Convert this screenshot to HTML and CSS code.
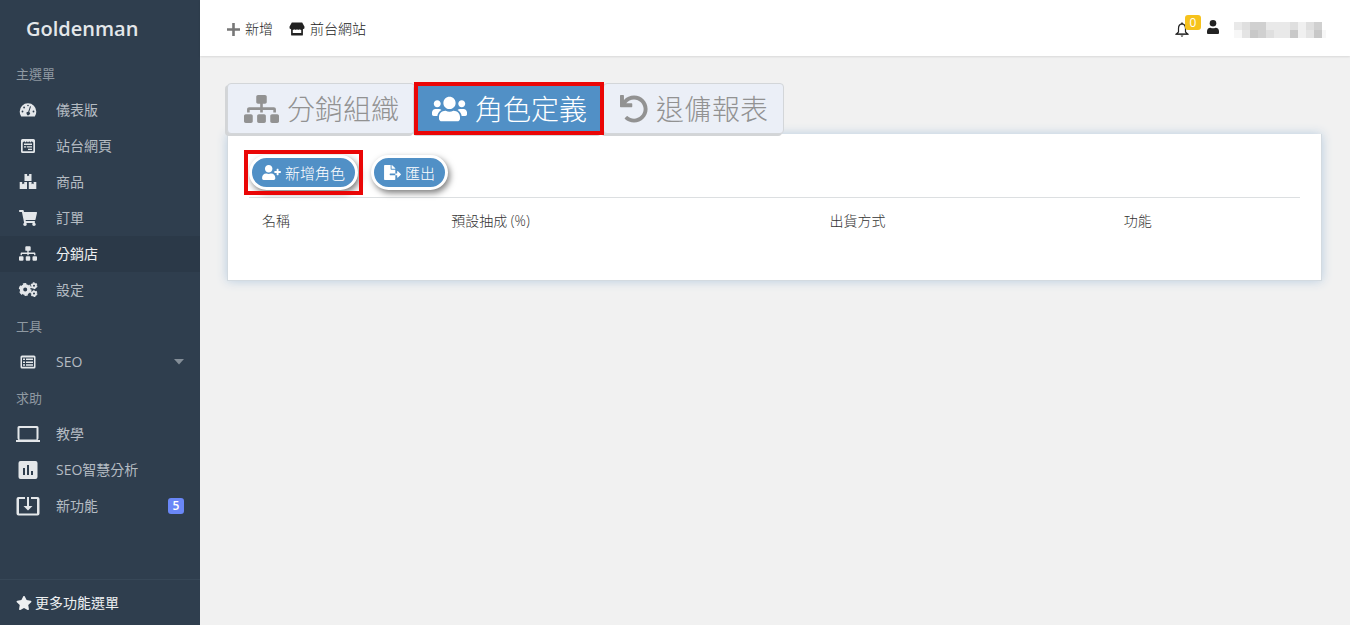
FILE: index.html
```html
<!DOCTYPE html>
<html lang="zh-Hant">
<head>
<meta charset="utf-8">
<meta name="viewport" content="width=device-width, initial-scale=1">
<title>Goldenman</title>
<link rel="stylesheet" href="styles.css">
</head>
<body>
<svg class="defs" aria-hidden="true">
  <symbol id="i-sitemap" viewBox="0 0 640 512"><path d="M128 352H32c-17.67 0-32 14.33-32 32v96c0 17.67 14.33 32 32 32h96c17.67 0 32-14.33 32-32v-96c0-17.67-14.33-32-32-32zm-24-80h192v48h48v-48h192v48h48v-57.59c0-21.17-17.23-38.41-38.41-38.41H344v-64h40c17.67 0 32-14.33 32-32V32c0-17.67-14.33-32-32-32H256c-17.67 0-32 14.33-32 32v96c0 17.67 14.33 32 32 32h40v64H94.41C73.23 224 56 241.23 56 262.41V320h48v-48zm264 80h-96c-17.67 0-32 14.33-32 32v96c0 17.67 14.33 32 32 32h96c17.67 0 32-14.33 32-32v-96c0-17.67-14.33-32-32-32zm240 0h-96c-17.67 0-32 14.33-32 32v96c0 17.67 14.33 32 32 32h96c17.67 0 32-14.33 32-32v-96c0-17.67-14.33-32-32-32z"/></symbol>
</svg>
<div class="app">
  <aside class="sidebar">
    <a class="brand" href="#">Goldenman</a>
    <nav class="menu">
      <h2 class="menu-title">主選單</h2>
      <a class="menu-item" href="#"><svg class="menu-icon" viewBox="0 0 24 24"><path fill-rule="evenodd" d="M5.200 18.500Q3.700 16.500 3.700 13.500a8.300 8.300 0 0 1 16.600 0Q20.300 16.500 18.800 18.500ZM11.200 7.500a.8.8 0 1 0 1.600 0a.8.8 0 1 0-1.600 0M7.200 9.500a.9.900 0 1 0 1.800 0a.9.900 0 1 0-1.800 0M5.600 13.500a.9.900 0 1 0 1.800 0a.9.900 0 1 0-1.800 0M16.600 13.500a.9.900 0 1 0 1.800 0a.9.900 0 1 0-1.800 0M14 8.200l-1.800 5.600a1.700 1.700 0 1 0 1 .3l1.800-5.600Z"/></svg><span>儀表版</span></a>
      <a class="menu-item" href="#"><svg class="menu-icon" viewBox="0 0 24 24"><path fill-rule="evenodd" d="M6.500 5h11q1.500 0 1.500 1.500v11q0 1.500-1.500 1.500h-11Q5 19 5 17.500v-11Q5 5 6.500 5ZM6.700 8.500v8.800h10.600V8.500l-1.600-1.200l-1.200 1.200l-1.300-1.200l-1.200 1.200l-1.200-1.200l-1.300 1.200l-1.200-1.200ZM8 9.500h8v1.500H8ZM8 12.200h2v1.300H8ZM10.800 12.200H16v1.300h-5.200ZM12 14.800h4v1.300h-4Z"/></svg><span>站台網頁</span></a>
      <a class="menu-item" href="#"><svg class="menu-icon" viewBox="0 0 24 24"><path d="M8.500 4h2.600v2.200l1-.6l1 .6V4h2.400v7h-7ZM3.700 12h2.500v2.200l1-.6l1 .6V12h2.800v7H3.700ZM12.800 12h2.800v2.200l1-.6l1 .6V12h2.700v7h-7.500Z"/></svg><span>商品</span></a>
      <a class="menu-item" href="#"><svg class="menu-icon" viewBox="-96 -96 768 704"><path d="M528.12 301.319l47.273-208C578.806 78.301 567.391 64 551.99 64H159.208l-9.166-44.81C147.758 8.021 137.93 0 126.529 0H24C10.745 0 0 10.745 0 24v16c0 13.255 10.745 24 24 24h69.883l70.248 343.435C147.325 417.1 136 435.222 136 456c0 30.928 25.072 56 56 56s56-25.072 56-56c0-15.674-6.447-29.835-16.824-40h209.647C430.447 426.165 424 440.326 424 456c0 30.928 25.072 56 56 56s56-25.072 56-56c0-22.172-12.888-41.332-31.579-50.405l5.517-24.276c3.413-15.018-8.002-29.319-23.403-29.319H218.117l-6.545-32h293.145c11.206 0 20.92-7.754 23.403-18.681z"/></svg><span>訂單</span></a>
      <a class="menu-item active" href="#" aria-current="page"><svg class="menu-icon" viewBox="0 0 24 24"><use href="#i-sitemap" x="3" y="4" width="18" height="15"/></svg><span>分銷店</span></a>
      <a class="menu-item" href="#"><svg class="menu-icon" viewBox="0 0 24 24"><g fill="none" stroke="currentColor"><circle cx="9.200" cy="11.500" r="3.700" stroke-width="3.400"/><circle cx="9.200" cy="11.500" r="5.600" stroke-width="1.600" stroke-dasharray="3.400 2.464"/><circle cx="18" cy="7.700" r="1.900" stroke-width="1.800"/><circle cx="18" cy="7.700" r="2.900" stroke-width="1.100" stroke-dasharray="1.700 1.337"/><circle cx="18" cy="15.600" r="1.900" stroke-width="1.800"/><circle cx="18" cy="15.600" r="2.900" stroke-width="1.100" stroke-dasharray="1.700 1.337"/></g></svg><span>設定</span></a>
      <h2 class="menu-title">工具</h2>
      <a class="menu-item" href="#"><svg class="menu-icon" viewBox="0 0 24 24"><path fill-rule="evenodd" d="M6 5.500h12q1.500 0 1.500 1.500v10q0 1.500-1.500 1.500H6Q4.500 18.500 4.500 17V7Q4.500 5.500 6 5.500ZM6 7.500v9.300h12V7.500ZM7 8.500h2V10H7ZM10 8.500h7V10h-7ZM7 11.400h2v1.500H7ZM10 11.400h7v1.500h-7ZM7 14.300h2v1.500H7ZM10 14.300h7v1.500h-7Z"/></svg><span>SEO</span><svg class="caret" viewBox="0 0 10 6"><path d="M0 0h10L5 5.500Z"/></svg></a>
      <h2 class="menu-title">求助</h2>
      <a class="menu-item" href="#"><svg class="menu-icon" viewBox="0 0 24 24"><path fill-rule="evenodd" d="M3 4h18q1.500 0 1.500 1.500V16q0 1.500-1 2H24v2H0v-2h2.500q-1-.500-1-2V5.500Q1.500 4 3 4ZM3.500 6v11.500h17V6Z"/></svg><span>教學</span></a>
      <a class="menu-item" href="#"><svg class="menu-icon" viewBox="0 0 24 24"><path fill-rule="evenodd" d="M4.500 3h15q2 0 2 2v14q0 2-2 2h-15q-2 0-2-2V5q0-2 2-2ZM7 10v7h2v-7ZM11 7v10h2V7ZM15 13v4h2v-4Z"/></svg><span>SEO智慧分析</span></a>
      <a class="menu-item" href="#"><svg class="menu-icon" viewBox="0 0 24 24"><path d="M2.500 3H9v2H3v14.500h18V5h-6V3h6.500Q23.500 3 23.500 5v14.500q0 2-2 2h-19q-2 0-2-2V5Q.5 3 2.500 3ZM11 3h2v9h3.500L12 16.500L7.500 12H11Z"/></svg><span>新功能</span><span class="count">5</span></a>
    </nav>
    <a class="more" href="#"><svg class="star" viewBox="0 0 576 512"><path d="M259.3 17.800L194 150.200 47.900 171.500c-26.200 3.800-36.700 36.100-17.700 54.600l105.700 103-25 145.500c-4.500 26.300 23.200 46 46.400 33.700L288 439.600l130.700 68.700c23.200 12.200 50.900-7.400 46.400-33.700l-25-145.500 105.700-103c19-18.500 8.500-50.800-17.700-54.600L382 150.200 316.700 17.800c-11.700-23.600-45.600-23.900-57.400 0z"/></svg>更多功能選單</a>
  </aside>
  <div class="page">
    <header class="topbar">
      <a class="top-link" href="#"><svg class="plus" viewBox="0 0 12 12"><path d="M4.800 0h2.400v4.800H12v2.400H7.200V12H4.800V7.200H0V4.800h4.800Z"/></svg>新增</a>
      <a class="top-link" href="#"><svg class="store" viewBox="0 0 17 14"><path fill-rule="evenodd" d="M3 0h11l2.500 4.500Q17 7 14.800 7.300V13q0 1-1 1H3.200q-1 0-1-1V7.300Q0 7 .5 4.500ZM4 8v3.200h9V8q-1-.2-1.500-.8q-1.500 1.200-3 0q-1.500 1.200-3 0Q5 7.800 4 8Z"/></svg>前台網站</a>
      <div class="top-right">
        <button class="bell" aria-label="通知"><svg viewBox="0 0 14 15"><path d="M7 1.800C4.500 2 3.500 4 3.500 6.500v3.500L1.500 12h11l-2-2V6.500C10.500 4 9.500 2 7 1.800Z" fill="none" stroke="currentColor" stroke-width="1.200"/><path d="M5.800 1.800a1.200 1.200 0 0 1 2.400 0ZM.500 11.800h13v.9H.5ZM5.500 13.500h3L7 15Z"/></svg><span class="bell-count">0</span></button>
        <a class="account" href="#" aria-label="帳號"><svg class="user" viewBox="0 0 12 14"><circle cx="6" cy="3.300" r="3.300"/><path d="M3.500 7.800q2.500 1 5 0Q12 8 12 11.500V13q0 1-1 1H1q-1 0-1-1v-1.500Q0 8 3.500 7.800Z"/></svg>
        <svg class="mosaic" viewBox="0 0 92 16" shape-rendering="crispEdges"><path fill="#e9e9e9" d="M0 0h8v8H0ZM32 0h24v8H32ZM40 8h16v8H40Z"/><path fill="#dfdfdf" d="M8 0h8v8H8ZM56 0h8v8h-8ZM72 0h8v8h-8ZM32 8h8v8h-8Z"/><path fill="#d0d0d0" d="M16 0h16v8H16ZM80 0h8v8h-8ZM24 8h8v8h-8Z"/><path fill="#c8c8c8" d="M16 8h8v8h-8ZM56 8h8v8h-8ZM80 8h8v8h-8Z"/><path fill="#e4e4e4" d="M8 8h8v8H8ZM72 8h8v8h-8Z"/><path fill="#f0f0f0" d="M64 0h8v16h-8Z"/><path fill="#f7f7f7" d="M0 8h8v8H0ZM88 8h6v8h-6Z"/></svg></a>
      </div>
    </header>
    <main class="content">
      <nav class="tabs">
        <a class="tab" href="#"><svg class="tab-icon" viewBox="0 0 640 512"><use href="#i-sitemap"/></svg>分銷組織</a>
        <a class="tab current marked" href="#" aria-current="page"><svg class="tab-icon" viewBox="0 0 640 512"><path d="M96 224c35.3 0 64-28.7 64-64s-28.7-64-64-64-64 28.7-64 64 28.7 64 64 64zm448 0c35.3 0 64-28.7 64-64s-28.7-64-64-64-64 28.7-64 64 28.7 64 64 64zm32 32h-64c-17.600 0-33.500 7.100-45.100 18.600 40.300 22.100 68.900 62 75.100 109.400h66c17.700 0 32-14.300 32-32v-32c0-35.300-28.700-64-64-64zm-256 0c61.900 0 112-50.100 112-112S381.900 32 320 32 208 82.100 208 144s50.100 112 112 112zm76.800 32h-8.300c-20.800 10-43.900 16-68.500 16s-47.600-6-68.500-16h-8.300C179.600 288 128 339.600 128 403.200V432c0 26.500 21.500 48 48 48h288c26.500 0 48-21.500 48-48v-28.800c0-63.600-51.600-115.200-115.200-115.200zm-223.700-13.400C161.500 263.100 145.600 256 128 256H64c-35.300 0-64 28.700-64 64v32c0 17.700 14.300 32 32 32h65.900c6.300-47.400 34.900-87.300 75.200-109.400z"/></svg>角色定義</a>
        <a class="tab" href="#"><svg class="tab-icon narrow" viewBox="0 0 512 512"><path d="M212.333 224.333H12c-6.627 0-12-5.373-12-12V12C0 5.373 5.373 0 12 0h48c6.627 0 12 5.373 12 12v78.112C117.773 39.279 184.26 7.47 258.175 8.007c136.906.994 246.448 111.623 246.157 248.532C504.041 393.258 393.12 504 256.333 504c-64.089 0-122.496-24.313-166.51-64.215-5.099-4.622-5.334-12.554-.467-17.42l33.967-33.967c4.474-4.474 11.662-4.717 16.401-.525C170.76 415.336 211.58 432 256.333 432c97.268 0 176-78.716 176-176 0-97.267-78.716-176-176-176-58.496 0-110.28 28.476-142.274 72.333h98.274c6.627 0 12 5.373 12 12v48c0 6.627-5.373 12-12 12z"/></svg>退傭報表</a>
      </nav>
      <section class="panel">
        <div class="actions">
          <div class="marked"><button class="pill"><svg class="add-icon" viewBox="0 0 640 512"><path d="M624 208h-64v-64c0-8.800-7.200-16-16-16h-32c-8.800 0-16 7.200-16 16v64h-64c-8.800 0-16 7.200-16 16v32c0 8.800 7.200 16 16 16h64v64c0 8.800 7.200 16 16 16h32c8.800 0 16-7.200 16-16v-64h64c8.800 0 16-7.200 16-16v-32c0-8.800-7.200-16-16-16zm-400 48c70.700 0 128-57.300 128-128S294.700 0 224 0 96 57.300 96 128s57.300 128 128 128zm89.600 32h-16.700c-22.200 10.200-46.900 16-72.900 16s-50.600-5.800-72.900-16h-16.700C60.200 288 0 348.200 0 422.400V464c0 26.500 21.500 48 48 48h352c26.500 0 48-21.500 48-48v-41.600c0-74.200-60.200-134.400-134.400-134.400z"/></svg>新增角色</button></div>
          <button class="pill"><svg class="export-icon" viewBox="0 0 576 512"><path d="M384 121.900c0-6.300-2.500-12.400-7-16.900L279.100 7c-4.500-4.500-10.600-7-17-7H256v128h128zM571 308l-95.700-96.400c-10.100-10.100-27.400-3-27.400 11.300V288h-64v64h64v65.200c0 14.300 17.300 21.400 27.400 11.300L571 332c6.600-6.600 6.600-17.400 0-24zm-379 28v-32c0-8.800 7.200-16 16-16h176V160H248c-13.200 0-24-10.800-24-24V0H24C10.700 0 0 10.700 0 24v464c0 13.300 10.700 24 24 24h336c13.300 0 24-10.700 24-24V352H208c-8.800 0-16-7.200-16-16z"/></svg>匯出</button>
        </div>
        <table class="roles">
          <thead><tr><th class="c-name">名稱</th><th class="c-rate">預設抽成 (%)</th><th class="c-ship">出貨方式</th><th class="c-tools">功能</th></tr></thead>
        </table>
      </section>
    </main>
  </div>
</div>
</body>
</html>
```

FILE: styles.css
```css
* { box-sizing: border-box; }

body {
  margin: 0;
  background: #f1f1f1;
  color: #333;
  font: 300 14px/20px "Open Sans", "Noto Sans CJK TC", sans-serif;
}

a { color: inherit; text-decoration: none; }
svg { fill: currentColor; flex: none; display: block; }
.defs { position: absolute; width: 0; height: 0; }

button {
  font: inherit;
  color: inherit;
  background: none;
  border: 0;
  padding: 0;
  cursor: pointer;
}

.app { display: flex; min-height: 100vh; }

/* Sidebar */
.sidebar {
  display: flex;
  flex-direction: column;
  flex: none;
  width: 200px;
  background: #2f3e4e;
  color: #b4bbc2;
  font-weight: 400;
}

.brand {
  padding: 2px 26px 0;
  color: #e4e7ea;
  font-size: 20px;
  font-weight: 600;
  line-height: 54px;
}

.menu { flex: 1; }

.menu-title {
  margin: 0;
  padding: 0 16px;
  color: #8f99a2;
  font-size: 13px;
  font-weight: 400;
  line-height: 36px;
}

.menu-item {
  display: flex;
  align-items: center;
  gap: 16px;
  height: 36px;
  padding: 0 16px;
}

.menu-item.active { background: #2b3948; color: #eef0f2; }
.menu-icon { width: 24px; height: 24px; color: #e4e7ea; }
.caret { width: 10px; height: 6px; margin-left: auto; color: #848e98; }

.count {
  margin-left: auto;
  width: 16px;
  border-radius: 3px;
  background: #6a87f7;
  color: #fff;
  font-size: 12px;
  font-weight: 600;
  line-height: 16px;
  text-align: center;
}

.more {
  display: flex;
  align-items: center;
  gap: 3px;
  height: 46px;
  padding: 0 16px;
  border-top: 1px solid #374757;
  color: #eef0f2;
}

.star { width: 16px; height: 16px; }

/* Top bar */
.page { flex: 1; min-width: 0; }

.topbar {
  display: flex;
  align-items: center;
  gap: 16px;
  height: 56px;
  padding: 2px 24px 0 27px;
  background: #fff;
  box-shadow: 0 1px 2px #0000001a;
  color: #222;
}

.top-link { display: flex; align-items: center; gap: 5px; }
.plus { width: 13px; height: 13px; color: #777; }
.store { width: 16px; height: 14px; }
.top-right { display: flex; align-items: center; gap: 18px; margin-left: auto; }
.bell { position: relative; }
.bell svg { width: 14px; height: 15px; }

.bell-count {
  position: absolute;
  left: 10px;
  bottom: 7px;
  width: 16px;
  border-radius: 3px;
  background: #f6c21c;
  color: #fff;
  font-size: 12px;
  font-weight: 400;
  line-height: 15px;
  text-align: center;
}

.account { display: flex; align-items: flex-end; gap: 15px; }
.user { width: 12px; height: 14px; margin-bottom: 4px; }
.mosaic { width: 92px; height: 16px; }

/* Tabs and panel */
.content { padding: 27px 28px 27px 27px; }
.tabs { display: flex; padding-right: 24px; }

.tab {
  display: flex;
  align-items: center;
  gap: 8px;
  height: 51px;
  padding: 0 15px 0 16px;
  border: 1px solid #d3d6d9;
  border-radius: 4px;
  background: #ebeff7;
  box-shadow: -2px 2px 0 #d3d5d7;
  color: #929292;
  font-size: 28px;
  white-space: nowrap;
}

.tab.current { background: #5190c6; color: #fff; }
.tab-icon { width: 35px; height: 28px; }
.tab-icon.narrow { width: 28px; }
.marked { position: relative; z-index: 1; }

.marked::after {
  content: "";
  position: absolute;
  inset: -2px;
  border: 4px solid #ea0606;
  pointer-events: none;
}

.panel {
  min-height: 147px;
  padding: 21px;
  border: 1px solid #d3dae0;
  border-top: 0;
  background: #fff;
  box-shadow: 0 0 10px #b9cde0;
}

.actions { display: flex; gap: 13px; padding-bottom: 7px; }
.actions .marked::after { inset: -5px; }

.pill {
  display: flex;
  align-items: center;
  gap: 4px;
  height: 35px;
  padding: 0 10px;
  border: 3px solid #fff;
  border-radius: 18px;
  background: #5190c6;
  box-shadow: 2px 3px 6px #00000080;
  color: #fff;
  font-size: 15px;
}

.add-icon { width: 19px; height: 15px; }
.export-icon { width: 17px; height: 15px; }

.roles {
  width: 100%;
  border-collapse: collapse;
  border-top: 1px solid #dcdfe1;
  table-layout: fixed;
}

.roles th {
  padding: 13px;
  font-weight: 300;
  text-align: left;
}

.c-name, .c-tools { width: 18%; }
.c-rate { width: 36%; }
```
